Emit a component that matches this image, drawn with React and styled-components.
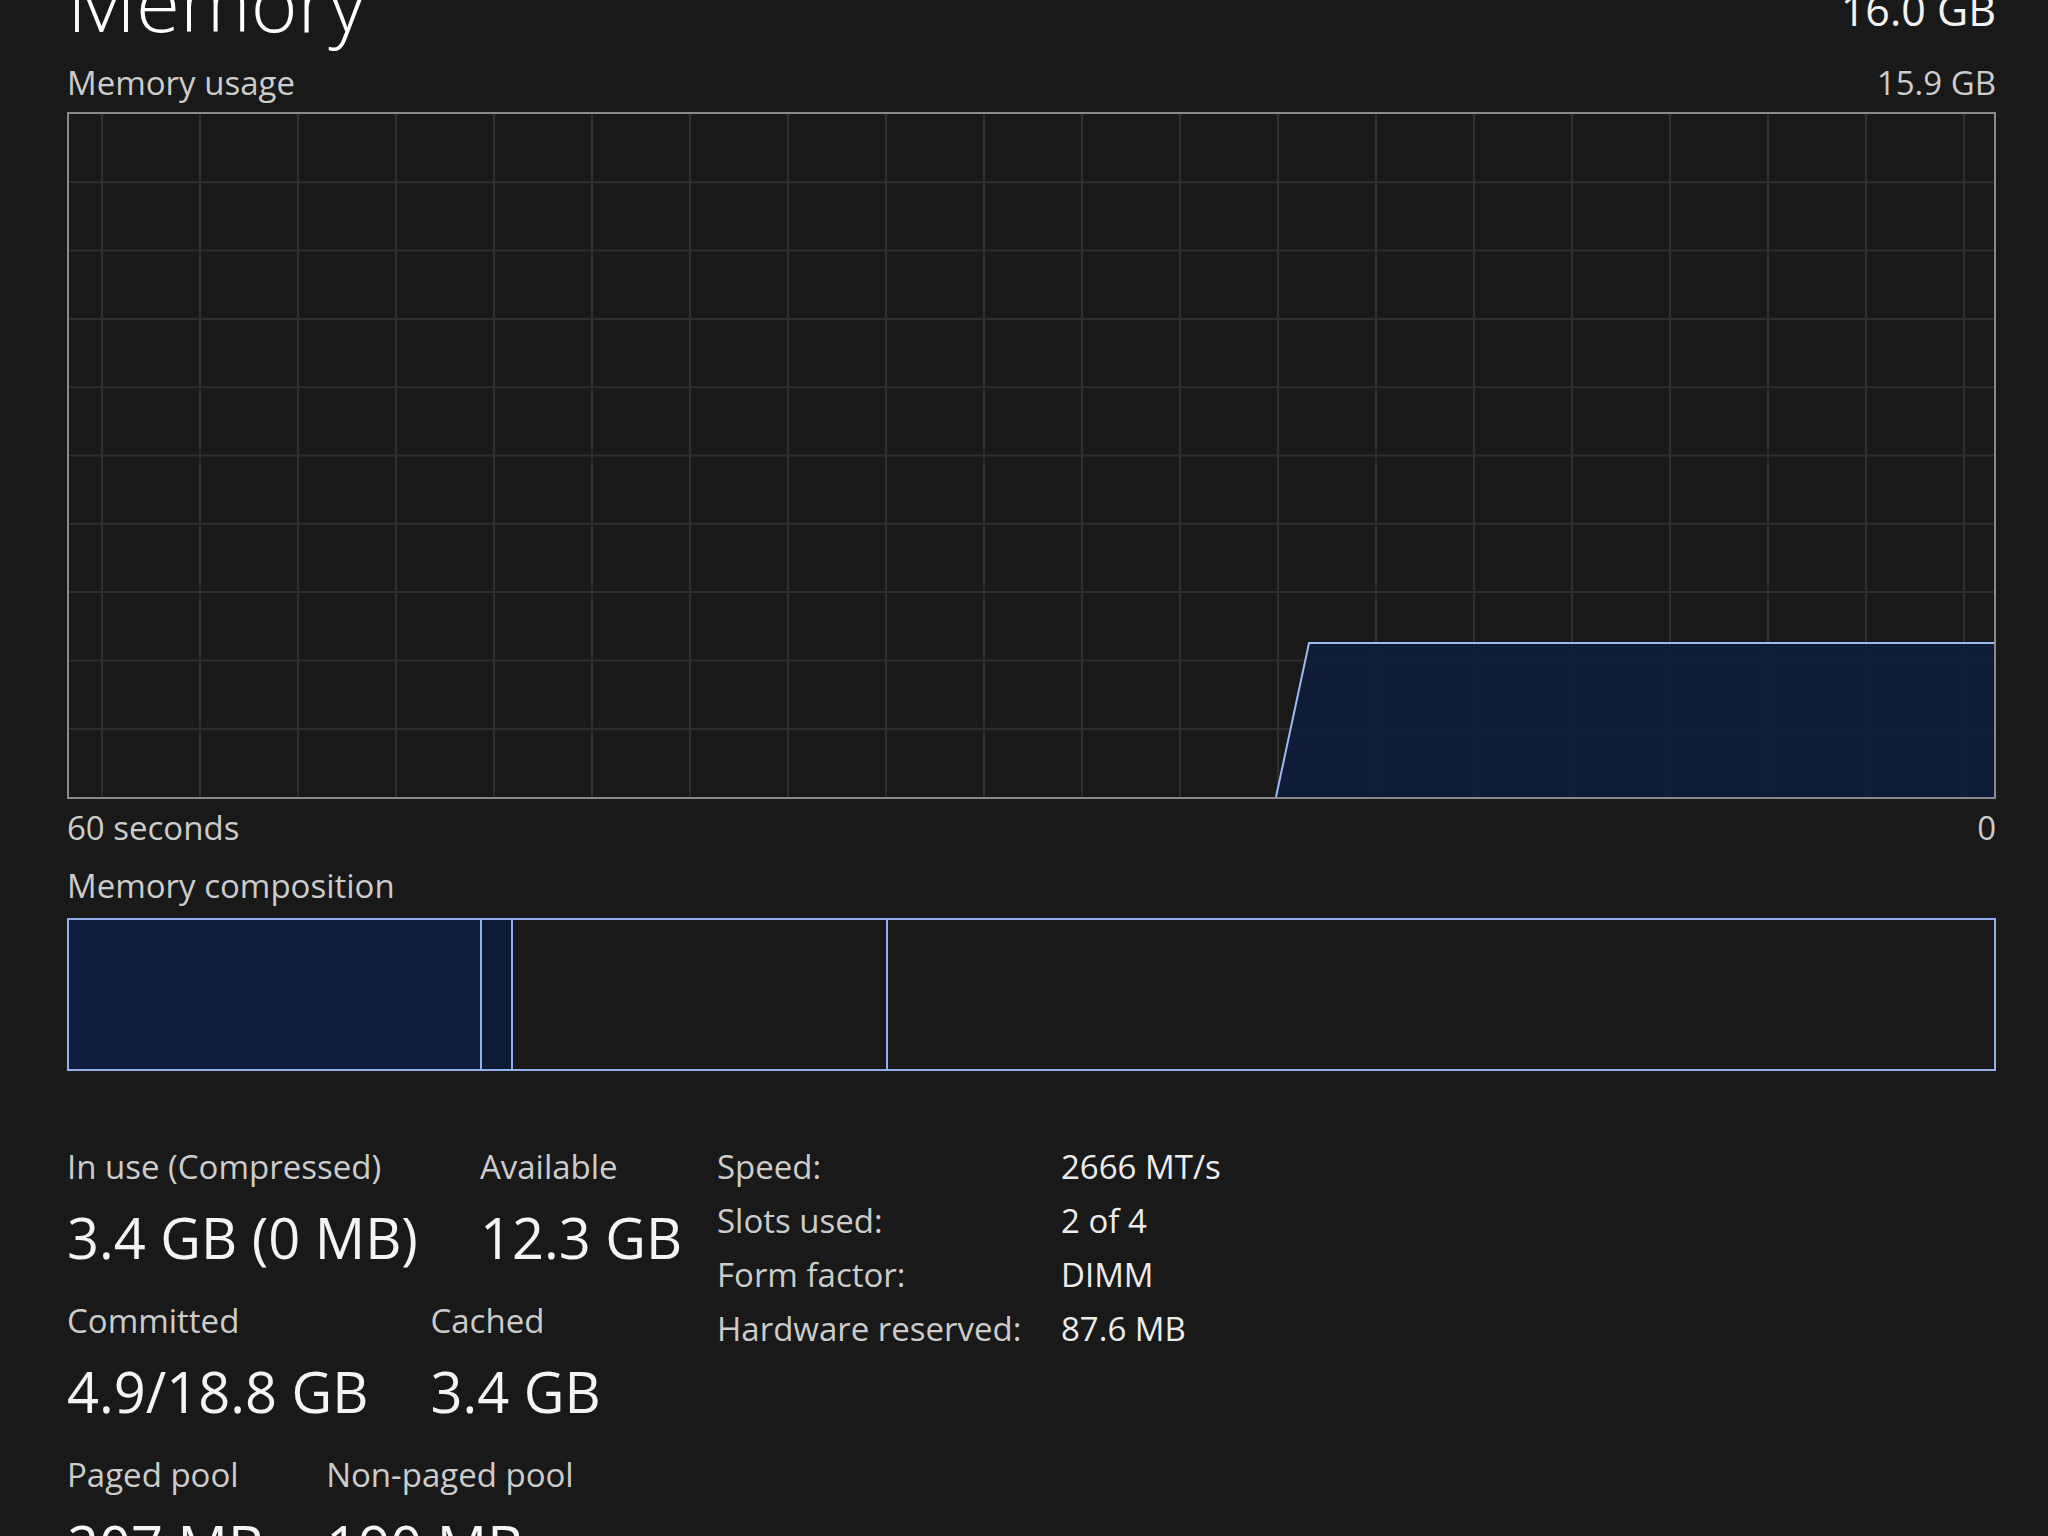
import React from 'react';
import styled, { createGlobalStyle } from 'styled-components';

const GlobalStyle = createGlobalStyle`
  html, body {
    margin: 0;
    padding: 0;
    background: #191919;
  }
  body {
    font-family: "Open Sans", "Noto Sans", sans-serif;
    color: #ffffff;
  }
`;

const CHART_W = 1925;
const CHART_H = 683;
const vLines = Array.from({ length: 20 }, (_, i) => 33 + i * 98);
const hLines = Array.from({ length: 9 }, (_, i) => ((i + 1) * CHART_H) / 10);

const segments = [
  { name: 'inuse', width: 413, fill: '#0f1e3d' },
  { name: 'modified', width: 31, fill: '#0d1a33' },
  { name: 'standby', width: 375, fill: 'transparent' },
  { name: 'free', width: null, fill: 'transparent' },
];

const leftStats = [
  [
    { label: 'In use (Compressed)', value: '3.4 GB (0 MB)' },
    { label: 'Available', value: '12.3 GB' },
  ],
  [
    { label: 'Committed', value: '4.9/18.8 GB' },
    { label: 'Cached', value: '3.4 GB' },
  ],
  [
    { label: 'Paged pool', value: '207 MB' },
    { label: 'Non-paged pool', value: '190 MB' },
  ],
];

const details = [
  ['Speed:', '2666 MT/s'],
  ['Slots used:', '2 of 4'],
  ['Form factor:', 'DIMM'],
  ['Hardware reserved:', '87.6 MB'],
];

export default function App() {
  return (
    <>
      <GlobalStyle />
      <Page>
        <Header>
          <Title>Memory</Title>
          <Total>16.0 GB</Total>
        </Header>

        <CaptionRow>
          <Caption>Memory usage</Caption>
          <Caption>15.9 GB</Caption>
        </CaptionRow>

        <Chart>
          <svg
            width="100%"
            height="100%"
            viewBox={`0 0 ${CHART_W} ${CHART_H}`}
            preserveAspectRatio="none"
          >
            {vLines.map((x) => (
              <line key={'v' + x} x1={x} y1={0} x2={x} y2={CHART_H} stroke="#2f2f2f" strokeWidth="2" />
            ))}
            {hLines.map((y) => (
              <line key={'h' + y} x1={0} y1={y} x2={CHART_W} y2={y} stroke="#2f2f2f" strokeWidth="2" />
            ))}
            <polygon
              points={`1207,${CHART_H} 1240,529 ${CHART_W},529 ${CHART_W},${CHART_H}`}
              fill="#0e1d3c"
              fillOpacity="0.88"
            />
            <polyline
              points={`1207,${CHART_H} 1240,529 ${CHART_W},529`}
              fill="none"
              stroke="#9dbaee"
              strokeWidth="2"
            />
          </svg>
        </Chart>

        <AxisRow>
          <Caption>60 seconds</Caption>
          <Caption>0</Caption>
        </AxisRow>

        <SectionLabel>Memory composition</SectionLabel>

        <Bar>
          {segments.map((s) => (
            <Segment key={s.name} $width={s.width} $fill={s.fill} />
          ))}
        </Bar>

        <Stats>
          <StatColumn>
            {leftStats.map((row, i) => (
              <StatRow key={i}>
                {row.map((item) => (
                  <StatItem key={item.label}>
                    <StatLabel>{item.label}</StatLabel>
                    <StatValue>{item.value}</StatValue>
                  </StatItem>
                ))}
              </StatRow>
            ))}
          </StatColumn>

          <DetailTable>
            {details.map(([k, v]) => (
              <React.Fragment key={k}>
                <DetailKey>{k}</DetailKey>
                <DetailValue>{v}</DetailValue>
              </React.Fragment>
            ))}
          </DetailTable>
        </Stats>
      </Page>
    </>
  );
}

const Page = styled.div`
  width: 2048px;
  height: 1536px;
  box-sizing: border-box;
  padding: 0 52px 0 67px;
  overflow: hidden;
  display: flex;
  flex-direction: column;

  & > * {
    flex-shrink: 0;
  }
`;

const Header = styled.div`
  display: flex;
  justify-content: space-between;
  align-items: flex-start;
  height: 67px;
`;

const Title = styled.div`
  font-size: 80px;
  font-weight: 300;
  line-height: 1;
  margin-top: -39px;
  color: #ffffff;
`;

const Total = styled.div`
  font-size: 43px;
  line-height: 1;
  margin-top: -12px;
  color: #f2f2f2;
`;

const CaptionRow = styled.div`
  display: flex;
  justify-content: space-between;
  margin-bottom: 13px;
`;

const Caption = styled.span`
  font-size: 33px;
  line-height: 32px;
  color: #cccccc;
`;

const Chart = styled.div`
  height: 687px;
  border: 2px solid #8a8a8a;
  box-sizing: border-box;

  svg {
    display: block;
  }
`;

const AxisRow = styled.div`
  display: flex;
  justify-content: space-between;
  margin-top: 13px;
`;

const SectionLabel = styled.div`
  font-size: 33px;
  line-height: 32px;
  color: #cccccc;
  margin-top: 26px;
`;

const Bar = styled.div`
  display: flex;
  height: 153px;
  margin-top: 16px;
  border: 2px solid #8fb0ea;
  box-sizing: border-box;
`;

const Segment = styled.div`
  flex: ${(p) => (p.$width ? `0 0 ${p.$width}px` : '1 1 auto')};
  box-sizing: border-box;
  background: ${(p) => p.$fill};
  border-right: 2px solid #8fb0ea;

  &:last-child {
    border-right: none;
  }
`;

const Stats = styled.div`
  display: flex;
  margin-top: 80px;
`;

const StatColumn = styled.div`
  width: 650px;
  display: flex;
  flex-direction: column;
  gap: 40px;
`;

const StatRow = styled.div`
  display: flex;
  gap: 62px;
`;

const StatItem = styled.div`
  display: flex;
  flex-direction: column;
`;

const StatLabel = styled.div`
  font-size: 33px;
  line-height: 32px;
  color: #cccccc;
  white-space: nowrap;
`;

const StatValue = styled.div`
  font-size: 56px;
  line-height: 56px;
  margin-top: 26px;
  color: #f4f4f4;
  white-space: nowrap;
`;

const DetailTable = styled.div`
  display: grid;
  grid-template-columns: 344px auto;
  grid-auto-rows: 54px;
  margin-top: -11px;
  align-self: flex-start;
`;

const DetailKey = styled.div`
  font-size: 33px;
  line-height: 54px;
  color: #cccccc;
  white-space: nowrap;
`;

const DetailValue = styled.div`
  font-size: 33px;
  line-height: 54px;
  color: #ececec;
  white-space: nowrap;
`;
